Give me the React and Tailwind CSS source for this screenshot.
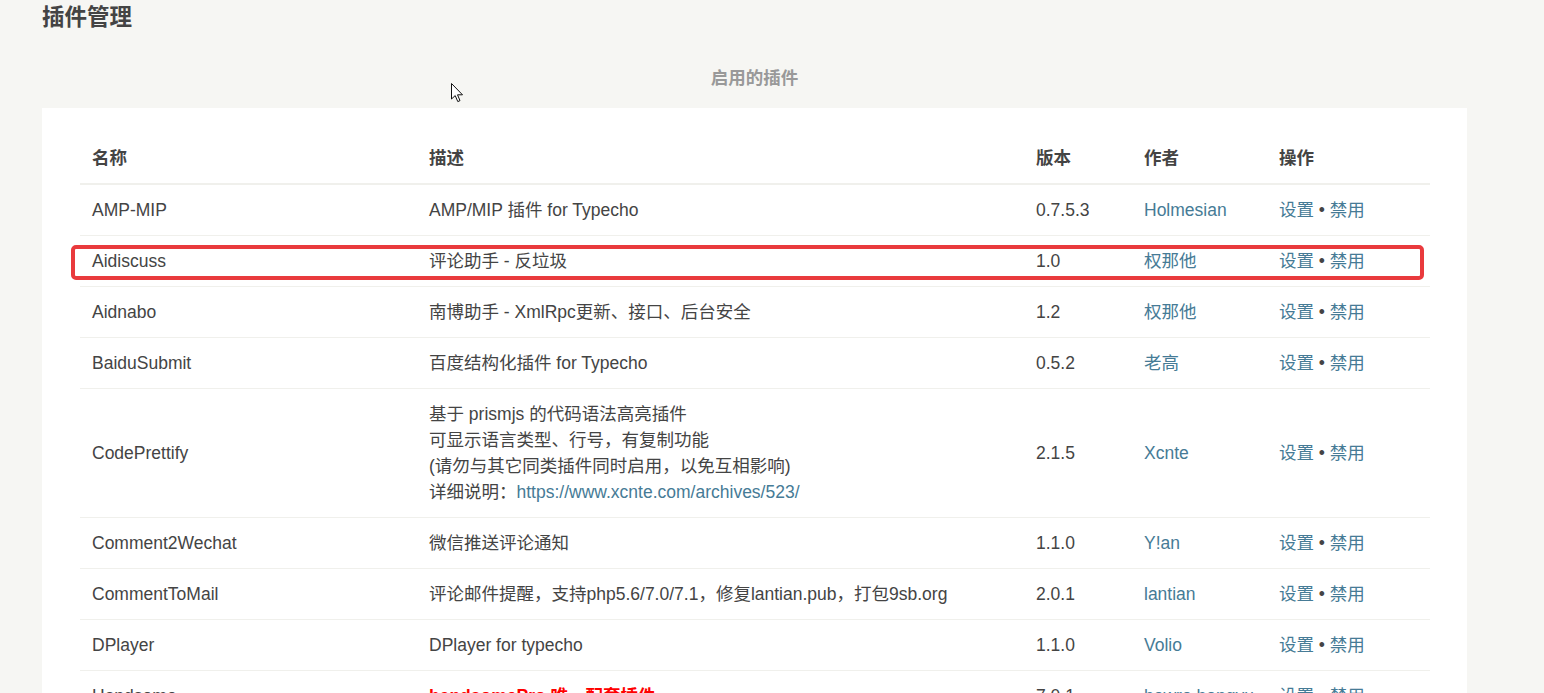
import React from "react";

const rows = [
  { name: "AMP-MIP", desc: ["AMP/MIP 插件 for Typecho"], ver: "0.7.5.3", author: "Holmesian" },
  { name: "Aidiscuss", desc: ["评论助手 - 反垃圾"], ver: "1.0", author: "权那他" },
  { name: "Aidnabo", desc: ["南博助手 - XmlRpc更新、接口、后台安全"], ver: "1.2", author: "权那他" },
  { name: "BaiduSubmit", desc: ["百度结构化插件 for Typecho"], ver: "0.5.2", author: "老高" },
  {
    name: "CodePrettify",
    desc: [
      "基于 prismjs 的代码语法高亮插件",
      "可显示语言类型、行号，有复制功能",
      "(请勿与其它同类插件同时启用，以免互相影响)",
    ],
    link: "https://www.xcnte.com/archives/523/",
    ver: "2.1.5",
    author: "Xcnte",
  },
  { name: "Comment2Wechat", desc: ["微信推送评论通知"], ver: "1.1.0", author: "Y!an" },
  { name: "CommentToMail", desc: ["评论邮件提醒，支持php5.6/7.0/7.1，修复lantian.pub，打包9sb.org"], ver: "2.0.1", author: "lantian" },
  { name: "DPlayer", desc: ["DPlayer for typecho"], ver: "1.1.0", author: "Volio" },
  { name: "Handsome", red: "handsomePro 唯一配套插件", ver: "7.0.1", author: "hewro,hongyu" },
  { name: "HelloWorld", desc: ["Hello World"], ver: "1.0.0", author: "qining" },
];

export default function App() {
  return (
    <div
      className="min-h-screen bg-[#f6f6f3] text-[#444]"
      style={{ fontFamily: '"Liberation Sans", "Noto Sans CJK SC", sans-serif' }}
    >
      <div className="relative">
        <div className="h-[36px] pl-[42px] flex items-center">
          <h1 className="text-[22.5px] font-bold leading-[28px] text-[#444]">插件管理</h1>
        </div>
        <div className="h-[72px] pt-[11px] flex items-center justify-center ml-[42px] w-[1425px]">
          <h2 className="text-[17.5px] font-bold leading-[26px] text-[#999]">启用的插件</h2>
        </div>
        <svg
          className="absolute left-[451px] top-[83px]"
          width="13"
          height="20"
          viewBox="0 0 13 20"
        >
          <path
            d="M0.5 0.5 L0.5 16 L4.2 12.6 L6.8 18.6 L9 17.6 L6.5 11.8 L11.5 11.8 Z"
            fill="#fff"
            stroke="#111"
            strokeWidth="1"
            strokeLinejoin="round"
          />
        </svg>
      </div>

      <div className="relative ml-[42px] w-[1425px] bg-white px-[38px] pt-[25px] pb-[40px]">
        <table className="w-[1350px] table-fixed border-collapse text-[17.5px] leading-[26px]">
          <colgroup>
            <col className="w-[337px]" />
            <col className="w-[607px]" />
            <col className="w-[108px]" />
            <col className="w-[135px]" />
            <col className="w-[163px]" />
          </colgroup>
          <thead>
            <tr className="border-b-2 border-[#f0f0ec]">
              {["名称", "描述", "版本", "作者", "操作"].map((h) => (
                <th key={h} className="text-left font-bold py-[12px] pl-[12px] text-[#444]">
                  {h}
                </th>
              ))}
            </tr>
          </thead>
          <tbody>
            {rows.map((r) => (
              <tr key={r.name} className="border-b border-[#f0f0ec]">
                <td className="py-[12px] pl-[12px] align-middle whitespace-nowrap">{r.name}</td>
                <td className="py-[12px] pl-[12px] align-middle whitespace-nowrap">
                  {r.red ? (
                    <span className="font-bold text-[#ff0000]">{r.red}</span>
                  ) : (
                    r.desc.map((d, i) => <div key={i}>{d}</div>)
                  )}
                  {r.link && (
                    <div>
                      详细说明：<a className="text-[#467b96]" href="#">{r.link}</a>
                    </div>
                  )}
                </td>
                <td className="py-[12px] pl-[12px] align-middle">{r.ver}</td>
                <td className="py-[12px] pl-[12px] align-middle whitespace-nowrap">
                  <a className="text-[#467b96]" href="#">{r.author}</a>
                </td>
                <td className="py-[12px] pl-[12px] align-middle whitespace-nowrap">
                  <a className="text-[#467b96]" href="#">设置</a>
                  <span className="text-[#444]"> • </span>
                  <a className="text-[#467b96]" href="#">禁用</a>
                </td>
              </tr>
            ))}
          </tbody>
        </table>
        <div className="absolute left-[29px] top-[137px] w-[1353px] h-[35px] border-4 border-[#e93a3d] rounded-[5px] pointer-events-none" />
      </div>
    </div>
  );
}
